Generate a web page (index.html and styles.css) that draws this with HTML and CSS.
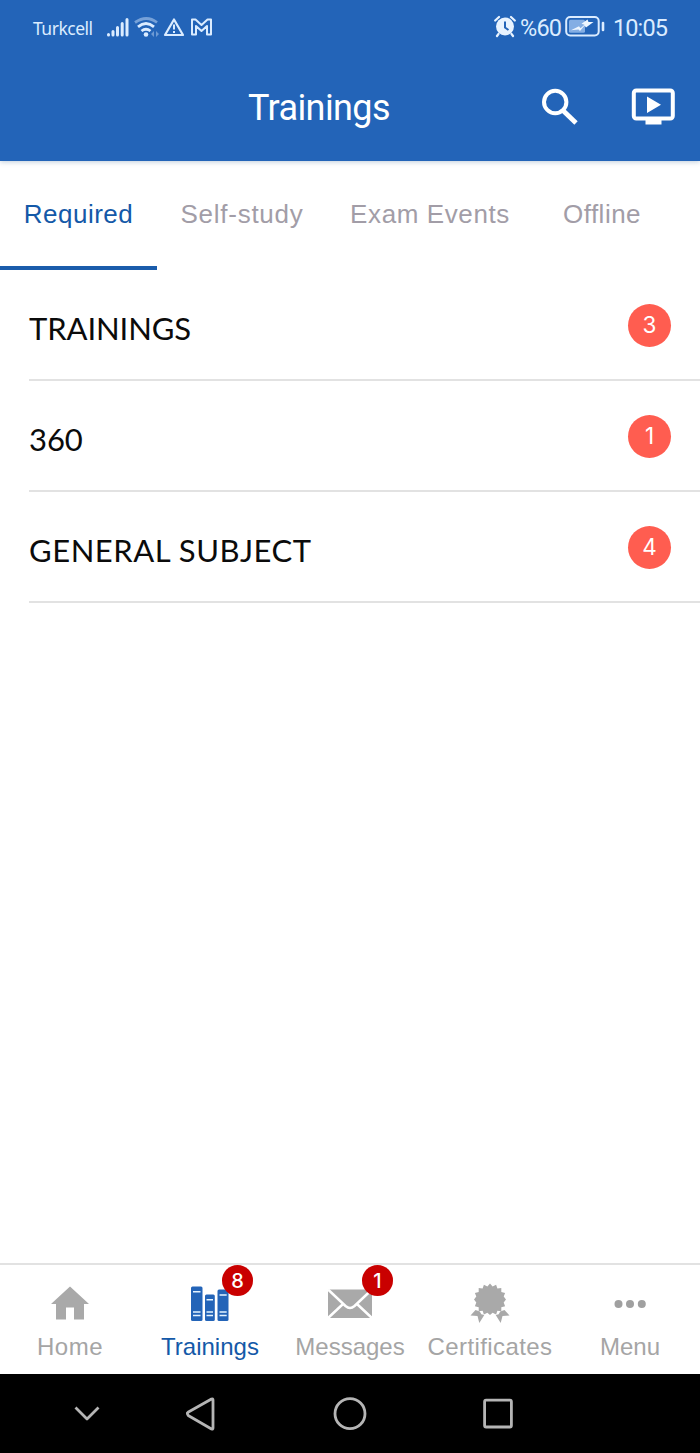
FILE: index.html
```html
<!DOCTYPE html>
<html lang="en">
<head>
  <meta charset="UTF-8" />
  <meta name="viewport" content="width=device-width, initial-scale=1.0"/>
  <title>Trainings</title>
  <link rel="stylesheet" href="styles.css">
</head>
<body>
  <div class="header">
    <div class="status">
      <span class="carrier">Turkcell</span>
      <svg class="status-icons" width="108" height="24" viewBox="0 0 108 24">
        <g stroke="#dbecff" stroke-width="3" stroke-linecap="round">
          <path d="M3.500 20.500v.5M8 17.500V21M12.500 13.500V21M17.200 9.500V21M22 5.500V21" />
        </g>
        <g fill="none" stroke="#dbecff" stroke-width="2.800">
          <path d="M30 8.500q11.500-8 22 0" opacity=".45" />
          <path d="M33 12.800q8-6.500 16 0M36.500 17q4.500-3.500 9 0" />
        </g>
        <circle cx="41" cy="20.500" r="2.300" fill="#dbecff" />
        <path d="M49 17l-3 3 3 3zM51 17l3 3-3 3z" fill="#dbecff" opacity=".4" />
        <path d="M69 5.500L78 21H60z" fill="none" stroke="#dbecff" stroke-width="2.200" stroke-linejoin="round" />
        <path d="M69 10.500v5M69 17v2" stroke="#dbecff" stroke-width="2" />
        <path d="M87 20.500V5.500h3.500l6 5.500 6-5.500h3.500v15h-4v-8.500l-5.500 5-5.500-5v8.500z" fill="none" stroke="#dbecff" stroke-width="2" stroke-linejoin="round" />
      </svg>
      <div class="status-right">
        <svg width="22" height="24" viewBox="0 0 22 24">
          <circle cx="11" cy="12.500" r="9" fill="#e8f3ff" />
          <path d="M1.200 6.500L5 3M20.800 6.500L17 3M4.500 20l-1.500 2M17.500 20l1.500 2" stroke="#e8f3ff" stroke-width="2.200" stroke-linecap="round" />
          <path d="M11 7.500v6l3.500 2.500" fill="none" stroke="#2364b8" stroke-width="2" />
        </svg>
        <span class="percent">%60</span>
        <svg class="battery" width="40" height="24" viewBox="0 0 40 24">
          <rect x="1.200" y="3" width="32.500" height="18.500" rx="4" fill="none" stroke="#dbecff" stroke-width="2" />
          <rect x="4" y="5.800" width="16" height="13" rx="1.500" fill="#84aee4" />
          <path d="M6 16.200l8-4 1.500 2 4-3.500-3-1 6-4.200 1 2.500h5l-7.500 5.500-1.500-2-4.500 5.500-1.500-1.500z" fill="#eef6ff" />
          <path d="M38 9v7" stroke="#dbecff" stroke-width="2.600" stroke-linecap="round" />
        </svg>
        <span class="clock">10:05</span>
      </div>
    </div>
    <div class="toolbar">
      <h1>Trainings</h1>
      <svg class="search" width="38" height="38" viewBox="0 0 38 38" fill="none" stroke="#fff">
        <circle cx="14.200" cy="14" r="11.200" stroke-width="4" />
        <path d="M22 22.500l13 12.500" stroke-width="4.800" />
      </svg>
      <svg width="44" height="38" viewBox="0 0 44 38">
        <rect x="2.800" y="2.500" width="39" height="28" rx="2.500" fill="none" stroke="#fff" stroke-width="4" />
        <path d="M14.500 31.500h16v5h-16zM16 8.500V25l14-8.200z" fill="#fff" />
      </svg>
    </div>
  </div>

  <div class="tabs">
    <div class="tab active">Required</div>
    <div class="tab self">Self-study</div>
    <div class="tab exam">Exam Events</div>
    <div class="tab offline">Offline</div>
  </div>

  <div class="list">
    <div class="row"><span class="name">TRAININGS</span><span class="count">3</span></div>
    <div class="row"><span class="name">360</span><span class="count">1</span></div>
    <div class="row"><span class="name general">GENERAL SUBJECT</span><span class="count">4</span></div>
  </div>

  <div class="bottom-bar">
    <div class="item home">
      <svg width="44" height="44" viewBox="0 0 44 44">
        <path d="M22 4.500L3 22h5v15.500h10v-12h8v12h10V22h5z" fill="#a9a9a9" />
      </svg>
      <span>Home</span>
    </div>
    <div class="item active">
      <svg width="44" height="44" viewBox="0 0 44 44">
        <g fill="#2364b8">
          <rect x="3" y="4.500" width="11.500" height="34.500" rx="1.500" />
          <rect x="17" y="12.500" width="9.800" height="26.500" rx="1.500" />
          <rect x="29.500" y="7.500" width="11" height="31.500" rx="1.500" />
        </g>
        <path d="M5 9.700h7.500M5 30h7.500M5 33.500h7.500M18.500 17.700h6.500M18.500 30h6.500M18.500 33.500h6.500M31.500 13h7.200M31.500 30h7.200M31.500 33.500h7.200" stroke="#e4f3ff" stroke-width="1.500" />
      </svg>
      <span>Trainings</span>
      <b class="badge">8</b>
    </div>
    <div class="item">
      <svg width="44" height="44" viewBox="0 0 44 44">
        <rect x="0" y="7.500" width="44" height="28.500" fill="#a9a9a9" />
        <path d="M0 7.500L17.500 24q4.500 4 9 0L44 7.500M-.5 36.500L15 22M44.500 36.500L29 22" fill="none" stroke="#fff" stroke-width="2.500" />
      </svg>
      <span>Messages</span>
      <b class="badge">1</b>
    </div>
    <div class="item certificates">
      <svg width="44" height="44" viewBox="0 0 44 44" fill="#a9a9a9">
        <path d="M22 1.500l2.600 3 3.500-1.800 1.300 3.700 3.900-.4v4l3.800 1-1.400 3.500L38 17.500l-2.300 3.100 1.400 3.600-3.800 1v4l-3.900-.4-1.300 3.700-3.500-1.800L22 33l-2.600-2.300-3.500 1.800-1.300-3.700-3.900.4v-4l-3.800-1 1.400-3.600L6 17.500l2.300-3-1.400-3.500 3.800-1V6l3.900.4 1.300-3.700 3.500 1.800z" />
        <path d="M7.500 28L2.500 33.500l7 .5 1.800 7 5-8-3-.7-1.500-2.800zM36.500 28l5 5.500-7 .5-1.800 7-5-8 3-.7 1.500-2.800z" />
      </svg>
      <span>Certificates</span>
    </div>
    <div class="item">
      <svg width="44" height="44" viewBox="0 0 44 44" fill="#a0a0a0">
        <circle cx="10.500" cy="22" r="4" /><circle cx="22" cy="22" r="4" /><circle cx="33.800" cy="22" r="4" />
      </svg>
      <span>Menu</span>
    </div>
  </div>

  <div class="nav">
    <svg width="26" height="36" viewBox="0 0 26 36"><path d="M1.500 11.500L13 23 24.500 11.500" /></svg>
    <svg width="30" height="36" viewBox="0 0 30 36"><path d="M1.500 18Q1 17 2 16.300L25.500 3q1.500-.5 1.500 1v28q0 1.500-1.500 1L2.200 19.500z" /></svg>
    <svg width="36" height="36" viewBox="0 0 36 36"><circle cx="18" cy="17.700" r="15" /></svg>
    <svg width="30" height="36" viewBox="0 0 30 36"><rect x="1.600" y="4.200" width="26.800" height="26.800" rx="1.500" /></svg>
  </div>
</body>
</html>
```
FILE: styles.css
```css
* {
  box-sizing: border-box;
}

body {
  margin: 0;
  height: 1453px;
  display: flex;
  flex-direction: column;
  background: #fff;
  font-family: "Liberation Sans", Arial, sans-serif;
}

svg {
  display: block;
  flex: none;
}

.header {
  height: 161px;
  background: #2364b8;
  color: #fff;
  box-shadow: 0 1px 5px rgba(0, 60, 110, 0.25);
}

.status {
  display: flex;
  align-items: center;
  height: 52px;
  padding: 0 33px;
  color: #dbecff;
  font-family: "Noto Sans", sans-serif;
}

.carrier {
  width: 60px;
  margin-top: 3px;
  font-size: 17.5px;
  letter-spacing: -0.5px;
  white-space: nowrap;
}

.status-icons {
  margin-left: 12px;
}

.status-right {
  display: flex;
  align-items: center;
  margin-left: auto;
  font-family: Roboto, sans-serif;
  font-size: 23.5px;
}

.status-right span {
  margin-top: 3px;
}

.status-right .percent {
  width: 42px;
  margin-left: 4px;
  letter-spacing: -0.8px;
}

.battery {
  margin: 0 8px 0 3px;
}

.clock {
  width: 54px;
  letter-spacing: -0.9px;
}

.toolbar {
  display: flex;
  align-items: center;
  height: 109px;
  padding: 0 25px 0 248px;
}

.toolbar h1 {
  margin: 3px 0 0;
  width: 293px;
  font: 400 36px Roboto, sans-serif;
  letter-spacing: -0.6px;
}

.search {
  margin-right: 52px;
}

.tabs {
  display: flex;
  height: 109px;
  color: #a29da7;
  font-size: 26px;
  letter-spacing: 0.5px;
}

.tab {
  width: 157px;
  line-height: 107px;
  text-align: center;
  white-space: nowrap;
}

.tab.active {
  color: #1459a8;
  border-bottom: 4px solid #1a5cab;
}

.tab.self {
  width: 170px;
  letter-spacing: 0.75px;
}

.tab.exam {
  width: 206px;
  letter-spacing: 0.6px;
}

.tab.offline {
  width: 138px;
}

.list {
  flex: 1;
  padding-left: 29px;
}

.row {
  display: flex;
  justify-content: space-between;
  align-items: center;
  height: 111px;
  padding-right: 29px;
  border-bottom: 2px solid #e2e2e2;
}

.name {
  margin-top: 6px;
  color: #0b0b0b;
  font-family: Lato, sans-serif;
  font-size: 31px;
  letter-spacing: -0.1px;
}

.name.general {
  letter-spacing: 0.55px;
}

.count {
  width: 43px;
  height: 43px;
  margin-top: 1px;
  border-radius: 50%;
  background: #ff5d50;
  color: #fff;
  font-family: Inter, sans-serif;
  font-size: 22.5px;
  line-height: 41px;
  text-align: center;
}

.bottom-bar {
  display: flex;
  height: 111px;
  border-top: 2px solid #e2e2e2;
  color: #a5a5a5;
  font-size: 24px;
}

.item {
  position: relative;
  width: 140px;
  padding-top: 17px;
  display: flex;
  flex-direction: column;
  align-items: center;
}

.item span {
  margin-top: 7px;
  line-height: 28px;
  white-space: nowrap;
}

.item.home span {
  letter-spacing: 0.5px;
}

.item.certificates span {
  letter-spacing: 0.4px;
}

.item.active {
  color: #1459a8;
}

.badge {
  position: absolute;
  top: 0;
  left: 82px;
  width: 31px;
  height: 31px;
  border-radius: 50%;
  background: #c90000;
  color: #fff;
  font: 500 20px/32px Inter, sans-serif;
  text-align: center;
}

.nav {
  display: flex;
  align-items: center;
  height: 79px;
  padding-left: 74px;
  background: #000;
}

.nav svg {
  fill: none;
  stroke: #b5b5b5;
  stroke-width: 2.8;
  stroke-linejoin: round;
}

.nav svg:nth-child(2) {
  margin-left: 86px;
}

.nav svg:nth-child(3) {
  margin-left: 116px;
}

.nav svg:nth-child(4) {
  margin-left: 115px;
}
```
